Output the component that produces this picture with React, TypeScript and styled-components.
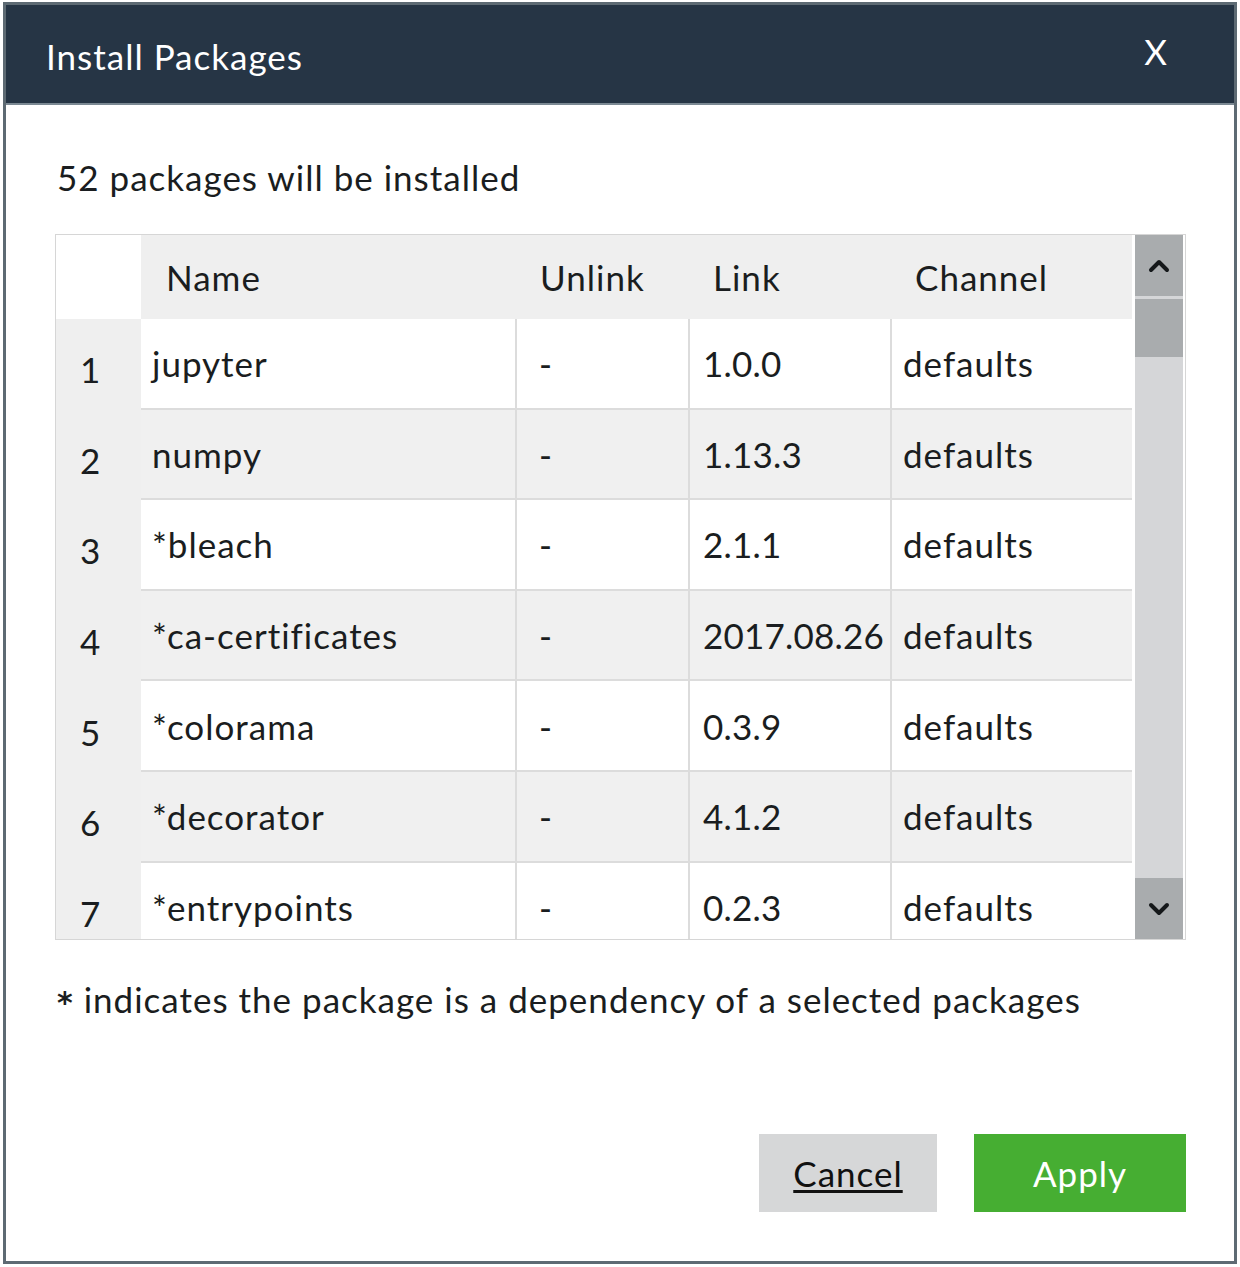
import React from 'react';
import styled, { createGlobalStyle } from 'styled-components';
import { ChevronUp, ChevronDown } from 'lucide-react';

const GlobalStyle = createGlobalStyle`
  html, body {
    margin: 0;
    padding: 0;
    background: #ffffff;
  }
  body {
    font-family: Lato, "Open Sans", "Liberation Sans", sans-serif;
    color: #1a1d20;
    letter-spacing: 1px;
  }
`;

const Dialog = styled.div`
  box-sizing: border-box;
  width: 1234px;
  height: 1262px;
  margin: 2px 0 0 3px;
  border: 3px solid #5d6a73;
  display: flex;
  flex-direction: column;
  background: #ffffff;
`;

const TitleBar = styled.div`
  height: 98px;
  background: #263545;
  border-bottom: 2px solid #7b8993;
  display: flex;
  align-items: center;
  justify-content: space-between;
  padding: 0 66px 0 40px;
`;

const Title = styled.div`
  color: #ffffff;
  font-size: 35px;
  padding-top: 4px;
`;

const CloseButton = styled.div`
  color: #ffffff;
  font-size: 35px;
  padding-bottom: 6px;
  cursor: pointer;
`;

const Body = styled.div`
  flex: 1;
  display: flex;
  flex-direction: column;
  padding: 0 48px 0 49px;
`;

const Summary = styled.div`
  font-size: 35px;
  margin: 52px 0 0 2px;
  height: 40px;
  line-height: 40px;
`;

const TableFrame = styled.div`
  margin-top: 37px;
  border: 1px solid #d6d6d6;
  display: flex;
  gap: 3px;
  height: 704px;
`;

const TableMain = styled.div`
  width: 1076px;
  display: flex;
  flex-direction: column;
`;

const Columns = `85px 374px 173px 202px 242px`;

const HeaderRow = styled.div`
  display: grid;
  grid-template-columns: ${Columns};
  height: 84px;
  flex-shrink: 0;
`;

const HeaderCell = styled.div<{ $corner?: boolean }>`
  background: ${({ $corner }) => ($corner ? '#ffffff' : '#efefef')};
  font-size: 35px;
  display: flex;
  align-items: center;
  padding: 0 0 0 25px;
`;

const Viewport = styled.div`
  flex: 1;
  overflow: hidden;
`;

const Row = styled.div`
  display: grid;
  grid-template-columns: ${Columns};
  height: 90.6px;
`;

const NumberCell = styled.div`
  background: #efefef;
  font-size: 35px;
  display: flex;
  align-items: center;
  padding: 10px 0 0 24px;
`;

const Cell = styled.div<{ $shaded: boolean; $divider?: boolean }>`
  background: ${({ $shaded }) => ($shaded ? '#f0f0f0' : '#ffffff')};
  border-bottom: 2px solid #dcdcdc;
  border-left: ${({ $divider }) => ($divider ? '2px solid #dcdcdc' : 'none')};
  font-size: 35px;
  display: flex;
  align-items: center;
  padding: 0 0 0 11px;
  white-space: nowrap;
`;

const DashCell = styled(Cell)`
  padding-left: 22px;
`;

const VersionCell = styled(Cell)`
  padding-left: 13px;
  letter-spacing: 0.2px;
`;

const Scrollbar = styled.div`
  width: 48px;
  background: #d5d6d8;
  display: flex;
  flex-direction: column;
`;

const ScrollButton = styled.div`
  height: 61px;
  background: #a9acae;
  display: flex;
  align-items: center;
  justify-content: center;
  color: #15181a;
`;

const Thumb = styled.div`
  height: 58px;
  margin-top: 3px;
  background: #a9acae;
`;

const Track = styled.div`
  flex: 1;
`;

const Note = styled.div`
  font-size: 35px;
  margin: 39px 0 0 2px;
  height: 40px;
  line-height: 40px;
`;

const Star = styled.span`
  font-family: "DejaVu Sans", sans-serif;
  font-weight: bold;
  font-size: 30px;
`;

const Actions = styled.div`
  margin-top: 115px;
  display: flex;
  justify-content: flex-end;
  gap: 37px;
`;

const ActionButton = styled.button<{ $primary?: boolean }>`
  height: 78px;
  width: ${({ $primary }) => ($primary ? '212px' : '178px')};
  border: none;
  background: ${({ $primary }) => ($primary ? '#46ae32' : '#d6d7d8')};
  color: ${({ $primary }) => ($primary ? '#ffffff' : '#111')};
  font-family: inherit;
  font-size: 35px;
  letter-spacing: 1px;
  text-decoration: ${({ $primary }) => ($primary ? 'none' : 'underline')};
  text-decoration-thickness: 3px;
  text-underline-offset: 3px;
  cursor: pointer;
`;

const packages = [
  { name: 'jupyter', link: '1.0.0' },
  { name: 'numpy', link: '1.13.3' },
  { name: '*bleach', link: '2.1.1' },
  { name: '*ca-certificates', link: '2017.08.26' },
  { name: '*colorama', link: '0.3.9' },
  { name: '*decorator', link: '4.1.2' },
  { name: '*entrypoints', link: '0.2.3' },
];

export default function App() {
  return (
    <>
      <GlobalStyle />
      <Dialog>
        <TitleBar>
          <Title>Install Packages</Title>
          <CloseButton>X</CloseButton>
        </TitleBar>
        <Body>
          <Summary>52 packages will be installed</Summary>
          <TableFrame>
            <TableMain>
              <HeaderRow>
                <HeaderCell $corner />
                <HeaderCell>Name</HeaderCell>
                <HeaderCell>Unlink</HeaderCell>
                <HeaderCell>Link</HeaderCell>
                <HeaderCell>Channel</HeaderCell>
              </HeaderRow>
              <Viewport>
                {packages.map((p, i) => {
                  const shaded = i % 2 === 1;
                  return (
                    <Row key={p.name}>
                      <NumberCell>{i + 1}</NumberCell>
                      <Cell $shaded={shaded}>{p.name}</Cell>
                      <DashCell $shaded={shaded} $divider>-</DashCell>
                      <VersionCell $shaded={shaded} $divider>{p.link}</VersionCell>
                      <Cell $shaded={shaded} $divider>defaults</Cell>
                    </Row>
                  );
                })}
              </Viewport>
            </TableMain>
            <Scrollbar>
              <ScrollButton>
                <ChevronUp size={32} strokeWidth={3} />
              </ScrollButton>
              <Thumb />
              <Track />
              <ScrollButton>
                <ChevronDown size={32} strokeWidth={3} />
              </ScrollButton>
            </Scrollbar>
          </TableFrame>
          <Note>
            <Star>*</Star> indicates the package is a dependency of a selected packages
          </Note>
          <Actions>
            <ActionButton>Cancel</ActionButton>
            <ActionButton $primary>Apply</ActionButton>
          </Actions>
        </Body>
      </Dialog>
    </>
  );
}
